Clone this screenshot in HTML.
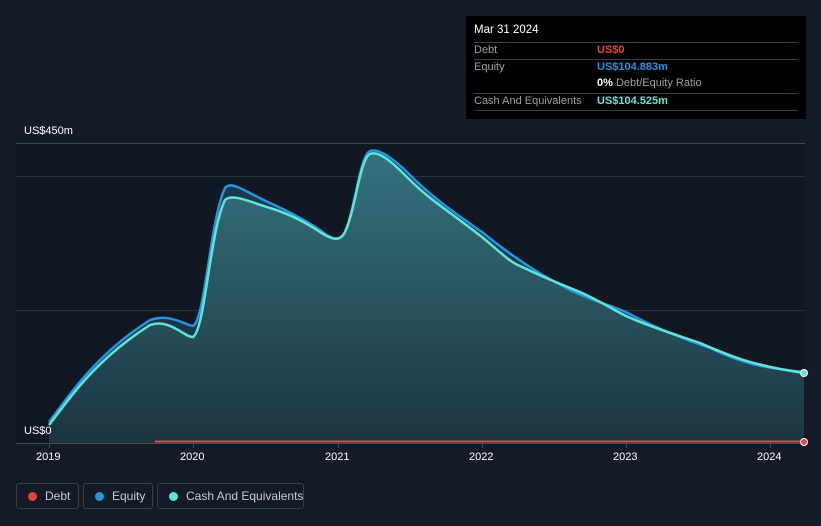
<!DOCTYPE html>
<html><head><meta charset="utf-8"><style>
html,body{margin:0;width:821px;height:526px;overflow:hidden}
body{background:#151b26;font-family:"Liberation Sans",sans-serif;position:relative}
.tt{position:absolute;left:466px;top:16px;width:340px;height:103px;background:#000;color:#fff;font-size:11px}
.tt .r{position:absolute;left:8px;width:324px;border-top:1px solid #3a3f47;height:16px}
.tt span,.tt div{white-space:nowrap}
.lg{position:absolute;top:483px;height:26px;border:1px solid #3a3f4a;border-radius:3px;color:#c8ccd2;font-size:12px;line-height:25px;box-sizing:border-box;white-space:nowrap}
.lg i{position:absolute;left:11px;top:8px;width:9px;height:9px;border-radius:50%}
.ax{position:absolute;color:#fff;font-size:11px;white-space:nowrap}
</style></head><body>
<svg width="821" height="526" style="position:absolute;left:0;top:0">
<defs><linearGradient id="g" x1="0" y1="0" x2="0" y2="1"><stop offset="0" stop-color="#34727f"/><stop offset="1" stop-color="#1c3540"/></linearGradient></defs>
<rect x="16" y="143" width="789" height="300" fill="#121821"/>
<line x1="16" y1="143.5" x2="805" y2="143.5" stroke="#444a53"/>
<line x1="16" y1="176.5" x2="805" y2="176.5" stroke="#2a303a"/>
<line x1="16" y1="310.5" x2="805" y2="310.5" stroke="#2a303a"/>
<line x1="16" y1="443.5" x2="805" y2="443.5" stroke="#444a53"/>
<path d="M49,422 C70,395 95,355 150,320 C170,313 185,325 193,326 C205,320 210,220 225,188 C232,180 245,192 270,203 C290,212 305,220 320,230 C332,240 340,242 345,232 C355,210 360,155 370,151 C380,148 395,160 410,175 C430,195 450,210 482,232 C510,255 540,275 570,290 C590,300 610,305 626,312 C650,325 680,338 710,348 C740,362 760,368 804,372 L804,443 L49,443 Z" fill="#17384e"/>
<path d="M49,425 C70,398 95,360 150,325 C170,318 185,338 193,337 C205,330 210,230 225,200 C232,193 250,202 270,208 C290,214 305,222 320,232 C332,240 340,242 345,232 C355,212 360,158 370,154 C380,150 395,165 410,180 C430,200 450,212 482,237 C500,252 510,262 520,266 C545,278 565,286 580,292 C600,301 610,308 626,316 C650,327 680,336 700,343 C730,356 750,365 804,373 L804,443 L49,443 Z" fill="url(#g)"/>
<path d="M49,422 C70,395 95,355 150,320 C170,313 185,325 193,326 C205,320 210,220 225,188 C232,180 245,192 270,203 C290,212 305,220 320,230 C332,240 340,242 345,232 C355,210 360,155 370,151 C380,148 395,160 410,175 C430,195 450,210 482,232 C510,255 540,275 570,290 C590,300 610,305 626,312 C650,325 680,338 710,348 C740,362 760,368 804,372" fill="none" stroke="#2394e0" stroke-width="2.5"/>
<path d="M49,425 C70,398 95,360 150,325 C170,318 185,338 193,337 C205,330 210,230 225,200 C232,193 250,202 270,208 C290,214 305,222 320,232 C332,240 340,242 345,232 C355,212 360,158 370,154 C380,150 395,165 410,180 C430,200 450,212 482,237 C500,252 510,262 520,266 C545,278 565,286 580,292 C600,301 610,308 626,316 C650,327 680,336 700,343 C730,356 750,365 804,373" fill="none" stroke="#5ee6d4" stroke-width="2.5"/>
<line x1="155" y1="441.5" x2="804" y2="441.5" stroke="#e04848" stroke-width="2"/>
<circle cx="804" cy="442" r="3.5" fill="#e04848" stroke="#fff" stroke-width="1"/>
<circle cx="804" cy="373" r="3.5" fill="#5ee6d4" stroke="#fff" stroke-width="1"/>
<g stroke="#444a53"><line x1="49.5" y1="443" x2="49.5" y2="448"/><line x1="193.5" y1="443" x2="193.5" y2="448"/><line x1="338.5" y1="443" x2="338.5" y2="448"/><line x1="482.5" y1="443" x2="482.5" y2="448"/><line x1="626.5" y1="443" x2="626.5" y2="448"/><line x1="770.5" y1="443" x2="770.5" y2="448"/></g>
</svg>
<div class="ax" style="left:24px;top:125px">US$450m</div>
<div class="ax" style="left:24px;top:425px">US$0</div>
<div class="ax" style="left:36px;top:451px">2019</div>
<div class="ax" style="left:180px;top:451px">2020</div>
<div class="ax" style="left:325px;top:451px">2021</div>
<div class="ax" style="left:469px;top:451px">2022</div>
<div class="ax" style="left:613px;top:451px">2023</div>
<div class="ax" style="left:757px;top:451px">2024</div>
<div class="tt">
<div style="position:absolute;left:8px;top:8px;font-size:11.5px">Mar 31 2024</div>
<div class="r" style="top:26px"><span style="position:absolute;left:0;top:1px;color:#9aa0a8">Debt</span><span style="position:absolute;left:123px;top:1px;color:#e84040;font-weight:bold">US$0</span></div>
<div class="r" style="top:43px"><span style="position:absolute;left:0;top:1px;color:#9aa0a8">Equity</span><span style="position:absolute;left:123px;top:1px;color:#2394e0;font-weight:bold">US$104.883m</span></div>
<div style="position:absolute;left:131px;top:61px"><b>0%</b> <span style="color:#9aa0a8">Debt/Equity Ratio</span></div>
<div class="r" style="top:77px"><span style="position:absolute;left:0;top:1px;color:#9aa0a8">Cash And Equivalents</span><span style="position:absolute;left:123px;top:1px;color:#5ee6d4;font-weight:bold">US$104.525m</span></div>
<div class="r" style="top:94px"></div>
</div>
<div class="lg" style="left:16px;width:63px"><i style="background:#e84040"></i><span style="position:absolute;left:28px">Debt</span></div>
<div class="lg" style="left:83px;width:70px"><i style="background:#2394e0"></i><span style="position:absolute;left:28px">Equity</span></div>
<div class="lg" style="left:157px;width:147px"><i style="background:#5ee6d4"></i><span style="position:absolute;left:28px">Cash And Equivalents</span></div>
</body></html>
